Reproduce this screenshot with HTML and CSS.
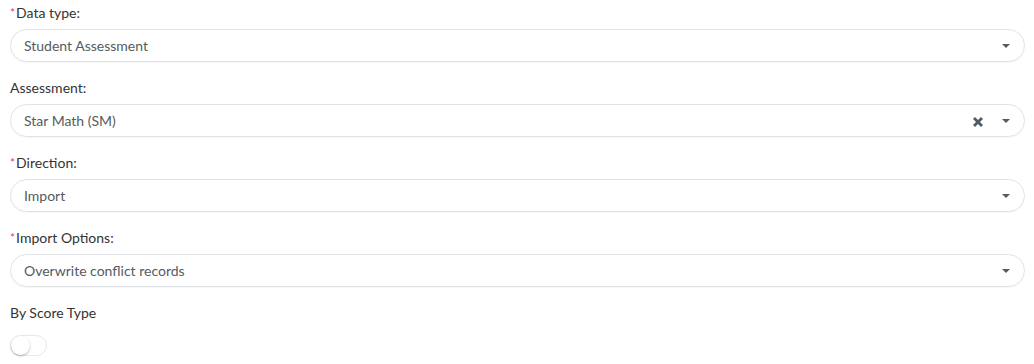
FILE: index.html
```html
<!DOCTYPE html>
<html>
<head>
<meta charset="utf-8">
<link rel="stylesheet" href="styles.css">
</head>
<body>
<div class="form">
  <div class="field">
    <div class="label"><span class="req">*</span>Data type:</div>
    <div class="select">
      <span class="value">Student Assessment</span>
      <span class="arrow"></span>
    </div>
  </div>
  <div class="field">
    <div class="label">Assessment:</div>
    <div class="select">
      <span class="value">Star Math (SM)</span>
      <svg class="clear" width="10" height="10" viewBox="0 0 10 10"><path d="M1 1 L9 9 M9 1 L1 9" stroke="#4d5b66" stroke-width="2.8" stroke-linecap="butt"/></svg>
      <span class="arrow"></span>
    </div>
  </div>
  <div class="field">
    <div class="label"><span class="req">*</span>Direction:</div>
    <div class="select">
      <span class="value">Import</span>
      <span class="arrow"></span>
    </div>
  </div>
  <div class="field">
    <div class="label"><span class="req">*</span>Import Options:</div>
    <div class="select">
      <span class="value">Overwrite conflict records</span>
      <span class="arrow"></span>
    </div>
  </div>
  <div class="field last">
    <div class="label">By Score Type</div>
    <div class="toggle"><span class="knob"></span></div>
  </div>
</div>
</body>
</html>
```
FILE: styles.css
```css
html, body {
  margin: 0;
  padding: 0;
  background: #ffffff;
}
body {
  font-family: "Lato", "Noto Sans", sans-serif;
  font-size: 14px;
  color: #333333;
}
.form {
  padding: 0 9px 0 10px;
}
.field {
  margin-bottom: 13px;
}
.label {
  height: 29px;
  box-sizing: border-box;
  padding-top: 3px;
  line-height: 20px;
  color: #333333;
}
.req {
  color: #e0474c;
  font-size: 12px;
  vertical-align: top;
  margin-right: 1px;
}
.select {
  height: 33px;
  box-sizing: border-box;
  border: 1px solid #dfe3e6;
  border-radius: 17px;
  box-shadow: 0 1px 1px rgba(0, 0, 0, 0.04);
  display: flex;
  align-items: center;
  padding: 0 14px 0 13px;
}
.value {
  flex: 1;
  color: #555b60;
}
.clear {
  margin-right: 19px;
  margin-top: 3px;
}
.arrow {
  width: 0;
  height: 0;
  border-left: 4px solid transparent;
  border-right: 4px solid transparent;
  border-top: 4px solid #555b60;
}
.field.last .label {
  height: 35px;
}
.toggle {
  width: 37px;
  height: 21px;
  box-sizing: border-box;
  border: 1px solid #e6e8ea;
  border-radius: 11px;
  background: #fff;
  display: flex;
  align-items: center;
}
.knob {
  width: 19px;
  height: 19px;
  border-radius: 50%;
  background: #fff;
  box-shadow: 0 1px 2px rgba(0, 0, 0, 0.3);
}
```
